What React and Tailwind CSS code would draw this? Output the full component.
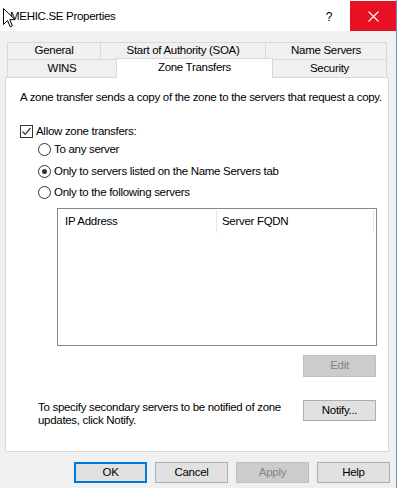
import React from "react";

const font = { fontFamily: '"Liberation Sans", Arial, sans-serif' };

function Radio({ checked }) {
  return (
    <span className="w-[13px] h-[13px] rounded-full border border-[#333333] bg-white flex items-center justify-center shrink-0">
      {checked && <span className="w-[5px] h-[5px] rounded-full bg-[#333333]" />}
    </span>
  );
}

function Checkbox() {
  return (
    <span className="w-[13px] h-[13px] border border-[#333333] bg-white flex items-center justify-center shrink-0">
      <svg width="11" height="11" viewBox="0 0 11 11">
        <path d="M1.5 5.5 L4.2 8.3 L9.5 2" fill="none" stroke="#333333" strokeWidth="1.2" />
      </svg>
    </span>
  );
}

function Btn({ children, className = "" }) {
  return (
    <div className={`w-[73px] h-[21px] flex items-center justify-center ${className}`}>
      {children}
    </div>
  );
}

export default function App() {
  return (
    <div
      className="w-[400px] h-[488px] bg-white flex overflow-hidden text-black text-[11.5px] tracking-[-0.3px]"
      style={font}
    >
      <div className="w-[397px] h-full flex flex-col bg-[#f0f0f0] border-r border-[#6c8db5] relative">
        {/* Title bar */}
        <div className="h-[31px] bg-white flex items-start shrink-0">
          <div className="pl-[10px] h-[31px] flex items-center pt-[2px] text-[11.5px]">MEHIC.SE Properties</div>
          <div className="ml-auto w-[24px] h-[31px] flex items-center justify-center pt-[2px] text-[12px]">?</div>
          <div className="ml-[9px] w-[46px] h-[30px] mt-[1px] bg-[#e81123] flex items-center justify-center">
            <svg width="11" height="11" viewBox="0 0 11 11">
              <path d="M0.5 0.5 L10.5 10.5 M10.5 0.5 L0.5 10.5" stroke="white" strokeWidth="1.1" />
            </svg>
          </div>
        </div>

        {/* Tabs */}
        <div className="ml-[7px] mt-[11px] w-[380px]">
          <div className="flex h-[17px]">
            <div className="w-[93px] border-t border-l border-[#d9d9d9] flex items-center justify-center leading-none">General</div>
            <div className="w-[165px] border-t border-l border-[#d9d9d9] flex items-center justify-center leading-none">Start of Authority (SOA)</div>
            <div className="w-[122px] border-t border-l border-r border-[#d9d9d9] flex items-center justify-center leading-none">Name Servers</div>
          </div>
          <div className="flex items-end h-[18px]">
            <div className="w-[109px] h-[18px] border-t border-l border-[#d9d9d9] flex items-center justify-center leading-none">WINS</div>
            <div className="w-[157px] h-[20px] -mb-[1px] relative z-10 bg-white border-t border-l border-r border-[#d9d9d9] flex items-start justify-center pt-[3px] leading-none">Zone Transfers</div>
            <div className="w-[114px] h-[18px] border-t border-r border-[#d9d9d9] flex items-center justify-center leading-none">Security</div>
          </div>
        </div>

        {/* Panel */}
        <div className="ml-[5px] w-[384px] h-[375px] border border-[#d9d9d9] bg-white flex flex-col shrink-0">
          <div className="pl-[14px] pt-[12px] leading-[15px] whitespace-nowrap">
            A zone transfer sends a copy of the zone to the servers that request a copy.
          </div>
          <div className="ml-[14px] mt-[20px] h-[13px] flex items-center gap-[3px]">
            <Checkbox />
            <span className="leading-none">Allow zone transfers:</span>
          </div>
          <div className="ml-[32px] mt-[5px] h-[13px] flex items-center gap-[3px]">
            <Radio />
            <span className="leading-none">To any server</span>
          </div>
          <div className="ml-[32px] mt-[9px] h-[13px] flex items-center gap-[3px]">
            <Radio checked />
            <span className="leading-none">Only to servers listed on the Name Servers tab</span>
          </div>
          <div className="ml-[32px] mt-[8px] h-[13px] flex items-center gap-[3px]">
            <Radio />
            <span className="leading-none">Only to the following servers</span>
          </div>

          {/* List */}
          <div className="ml-[51px] mt-[9px] w-[320px] h-[138px] border border-[#828790] bg-white flex flex-col">
            <div className="h-[24px] flex items-stretch pt-[1px]">
              <div className="w-[159px] flex items-center pl-[7px] border-r border-[#e5e5e5]">IP Address</div>
              <div className="w-[157px] flex items-center pl-[5px] border-r border-[#e5e5e5]">Server FQDN</div>
            </div>
          </div>

          <Btn className="ml-[297px] mt-[9px] h-[22px] bg-[#cccccc] border border-[#bfbfbf] text-[#838383]">Edit</Btn>

          <div className="mt-[23px] flex items-start">
            <div className="ml-[32px] w-[265px] mt-[1px] leading-[13px] whitespace-nowrap">
              To specify secondary servers to be notified of zone
              <br />
              updates, click Notify.
            </div>
            <Btn className="bg-[#e1e1e1] border border-[#adadad]">Notify...</Btn>
          </div>
        </div>

        {/* Bottom buttons */}
        <div className="mt-[10px] pl-[74px] flex gap-[8px]">
          <Btn className="bg-[#e1e1e1] border-2 border-[#0078d7]">OK</Btn>
          <Btn className="bg-[#e1e1e1] border border-[#adadad]">Cancel</Btn>
          <Btn className="bg-[#cccccc] border border-[#bfbfbf] text-[#838383]">Apply</Btn>
          <Btn className="bg-[#e1e1e1] border border-[#adadad]">Help</Btn>
        </div>

        {/* Mouse cursor */}
        <svg className="absolute left-[3px] top-[8px]" width="13" height="20" viewBox="0 0 13 20">
          <path d="M0.5 0.5 L0.5 16.5 L4.5 12.5 L7.2 18.8 L9.4 17.9 L6.8 11.7 L12 11.7 Z" fill="white" stroke="black" strokeWidth="1" strokeLinejoin="miter" />
        </svg>
      </div>
    </div>
  );
}
